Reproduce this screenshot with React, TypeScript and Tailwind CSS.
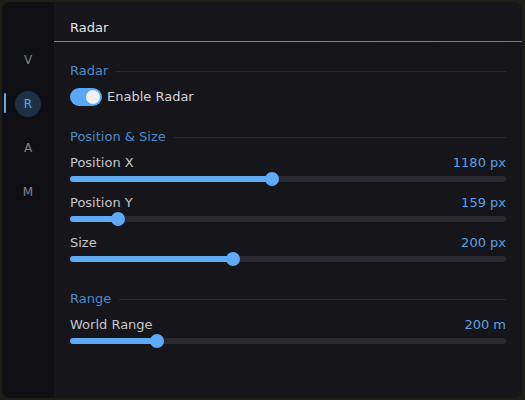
import React from "react";

const font = { fontFamily: '"DejaVu Sans", Verdana, sans-serif' };

function SectionHeading({ title }: { title: string }) {
  return (
    <div className="flex items-center gap-2 h-[18px]">
      <span className="text-[13px] leading-[18px] text-[#4d8bc9]">{title}</span>
      <div className="flex-1 h-px bg-[#2a2a34]" />
    </div>
  );
}

function Slider({ label, value, pct }: { label: string; value: string; pct: number }) {
  return (
    <div className="flex flex-col">
      <div className="flex justify-between h-[18px] text-[13px] leading-[18px]">
        <span className="text-[#c6c6cc]">{label}</span>
        <span className="text-[#5aa2e6]">{value}</span>
      </div>
      <div className="h-[14px] flex items-center">
        <div className="relative w-full h-[6px] rounded-full bg-[#292932]">
          <div
            className="absolute left-0 top-0 h-full rounded-full bg-[#5eaaf7]"
            style={{ width: `calc(7px + (100% - 14px) * ${pct})` }}
          />
          <div
            className="absolute top-1/2 w-[14px] h-[14px] -mt-[7px] rounded-full bg-[#5eaaf7]"
            style={{ left: `calc((100% - 14px) * ${pct})` }}
          />
        </div>
      </div>
    </div>
  );
}

const tabs = ["V", "R", "A", "M"];

export default function App() {
  return (
    <div className="w-[525px] h-[400px] bg-[#1f1d18] p-[2px] pr-[3px]" style={font}>
      <div className="flex h-full rounded-[8px] overflow-hidden bg-[#15151a]">
        <aside className="w-[52px] bg-[#0f0f13] flex flex-col items-center pt-[45px] gap-[18px]">
          {tabs.map((t) => {
            const active = t === "R";
            return (
              <div key={t} className="relative w-full h-[26px] flex items-center justify-center">
                {active && (
                  <div className="absolute left-[2px] top-[2px] w-[2px] h-[20px] rounded-full bg-[#5eaaf7]" />
                )}
                <div
                  className={
                    active
                      ? "w-[26px] h-[26px] rounded-full bg-[#1d3046] flex items-center justify-center text-[12px] text-[#5ea4ea]"
                      : "w-[26px] h-[26px] flex items-center justify-center text-[12px] text-[#85858f]"
                  }
                >
                  {t}
                </div>
              </div>
            );
          })}
        </aside>
        <main className="flex-1 flex flex-col">
          <header className="h-[40px] pt-[13px] px-4 border-b border-transparent relative">
            <span className="text-[13px] leading-[18px] text-[#e2e2e6]">Radar</span>
            <div className="absolute left-0 right-0 bottom-[-1px] h-px bg-gradient-to-r from-[#5a90d8] to-[#9c5ac8]" />
          </header>
          <div className="px-4 pt-5 flex flex-col">
            <SectionHeading title="Radar" />
            <div className="flex items-center gap-[5px] mt-2 h-[18px]">
              <div className="relative w-[32px] h-[18px] rounded-full bg-[#58a8f5]">
                <div className="absolute right-[2px] top-[2px] w-[14px] h-[14px] rounded-full bg-[#f0f0f2]" />
              </div>
              <span className="text-[13px] leading-[18px] text-[#d2d2d6]">Enable Radar</span>
            </div>

            <div className="mt-[22px]">
              <SectionHeading title="Position & Size" />
            </div>
            <div className="flex flex-col gap-2 mt-2">
              <Slider label="Position X" value="1180 px" pct={0.462} />
              <Slider label="Position Y" value="159 px" pct={0.097} />
              <Slider label="Size" value="200 px" pct={0.37} />
            </div>

            <div className="mt-6">
              <SectionHeading title="Range" />
            </div>
            <div className="flex flex-col gap-2 mt-2">
              <Slider label="World Range" value="200 m" pct={0.189} />
            </div>
          </div>
        </main>
      </div>
    </div>
  );
}
